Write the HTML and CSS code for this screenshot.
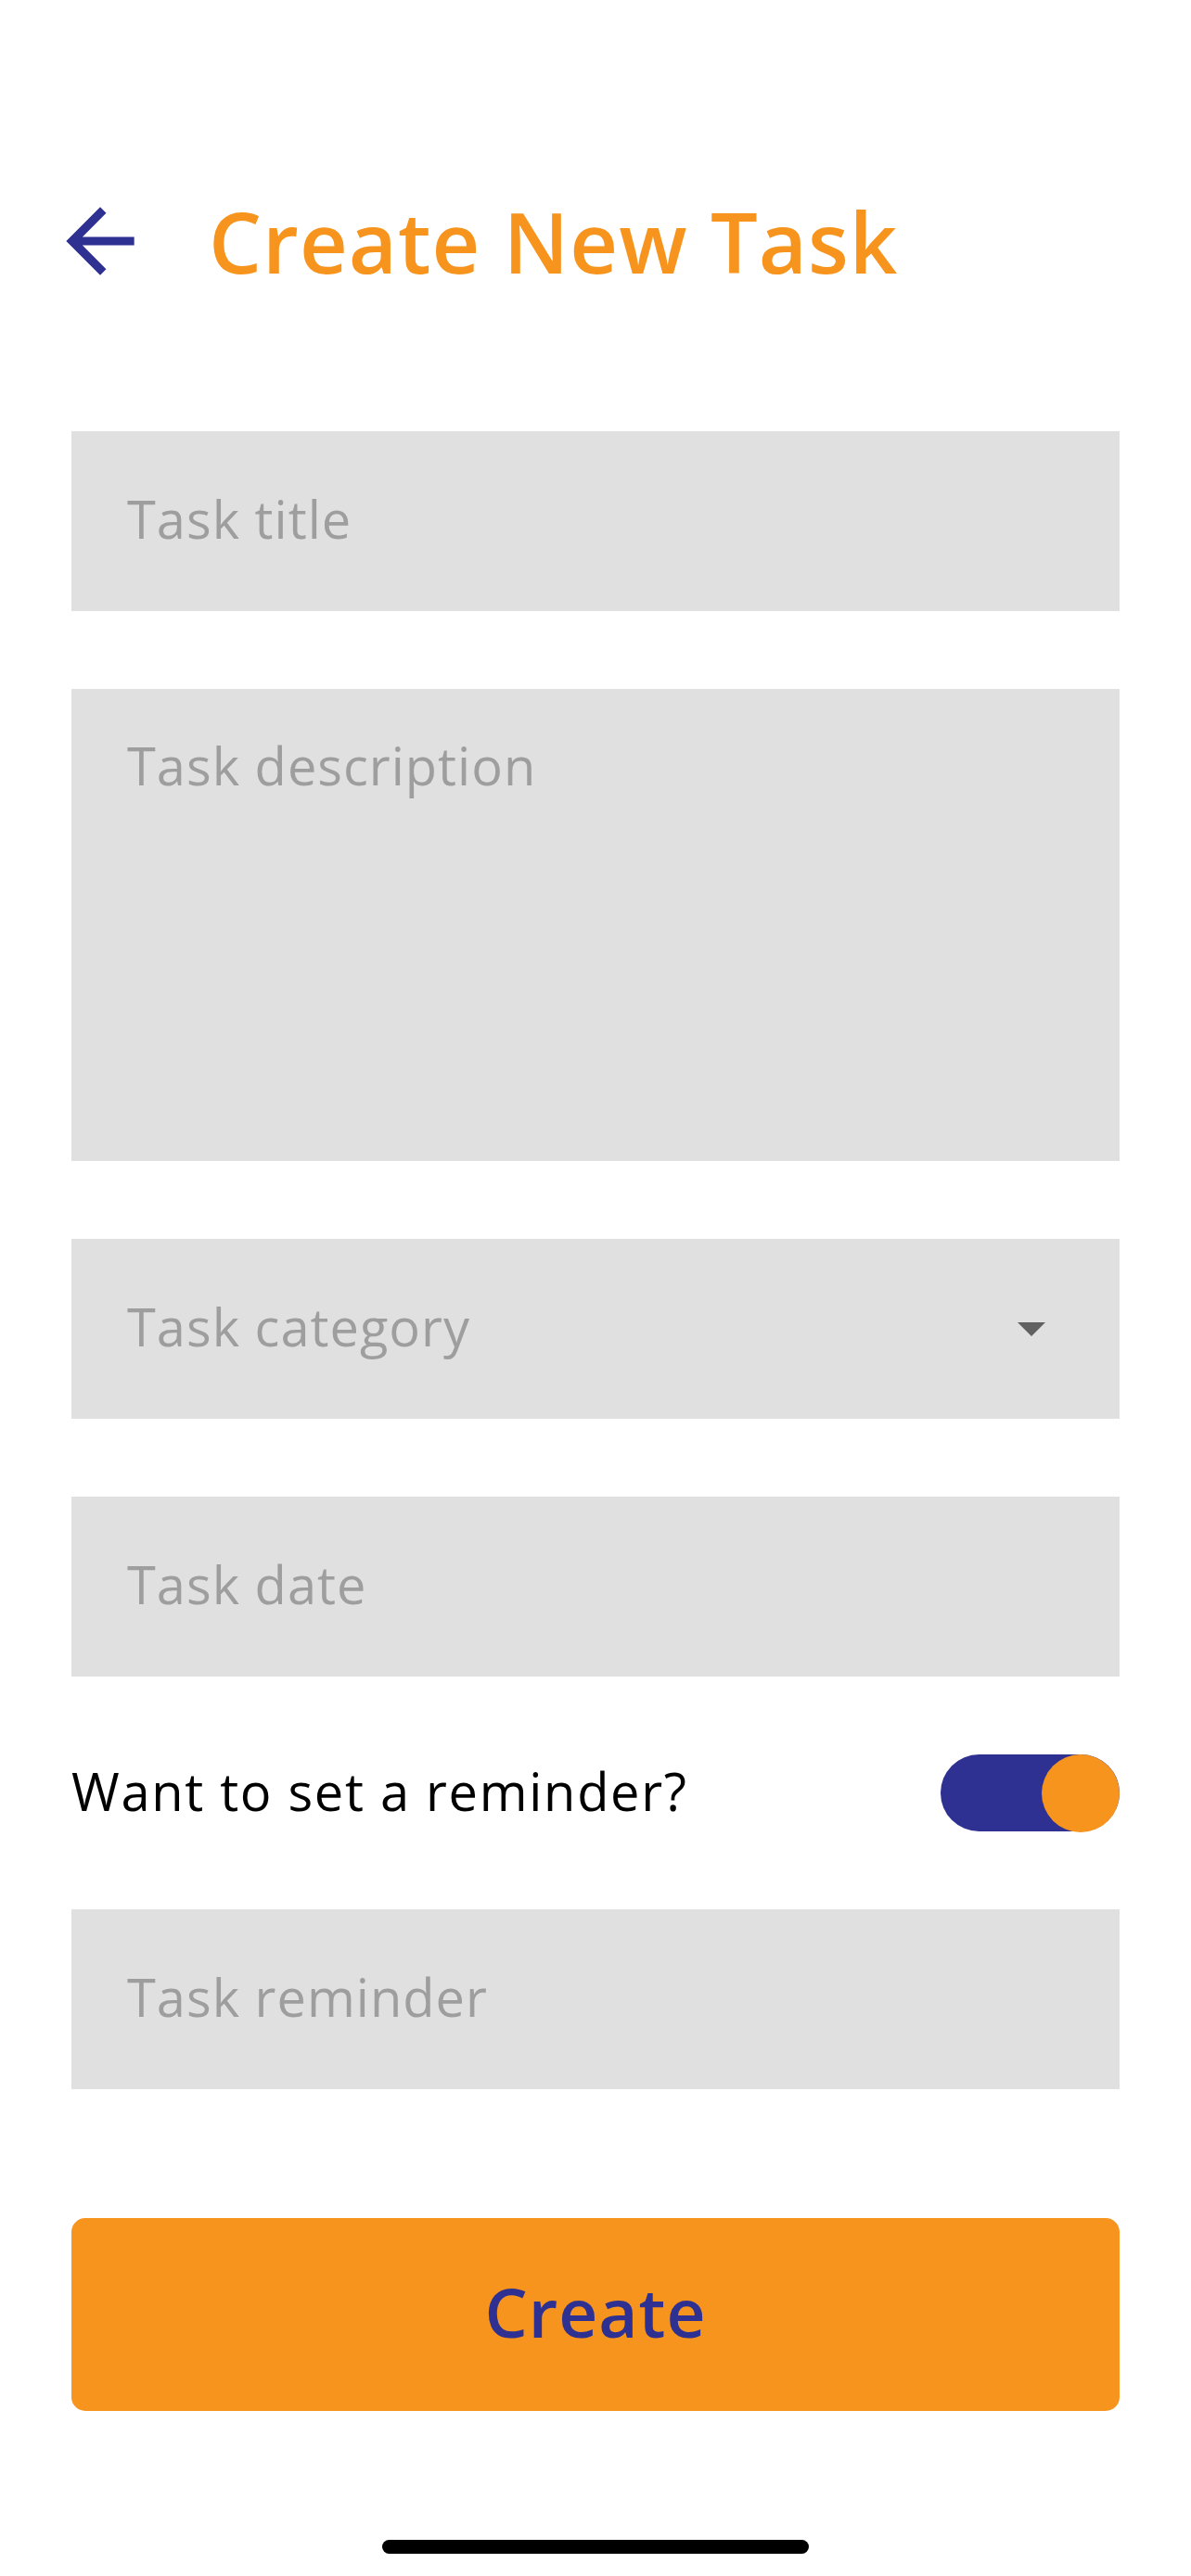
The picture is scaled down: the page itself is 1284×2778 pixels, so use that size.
FILE: index.html
```html
<!DOCTYPE html>
<html lang="en">
<head>
<meta charset="utf-8">
<title>Create New Task</title>
<link rel="stylesheet" href="styles.css">
</head>
<body>
<div class="screen">
  <header class="header">
    <svg class="back" viewBox="0 0 24 24" aria-hidden="true">
      <path d="M20 11H7.83l5.59-5.59L12 4l-8 8 8 8 1.41-1.41L7.83 13H20v-2z"/>
    </svg>
    <h1 class="title">Create New Task</h1>
  </header>

  <form class="form">
    <div class="field"><span class="placeholder">Task title</span></div>
    <div class="field field-area"><span class="placeholder">Task description</span></div>
    <div class="field field-select">
      <span class="placeholder">Task category</span>
      <span class="caret"></span>
    </div>
    <div class="field"><span class="placeholder">Task date</span></div>
    <div class="switch-row">
      <span class="switch-label">Want to set a reminder?</span>
      <span class="switch"><span class="knob"></span></span>
    </div>
    <div class="field"><span class="placeholder">Task reminder</span></div>
  </form>

  <button class="create" type="button">Create</button>

  <div class="home-indicator"></div>
</div>
</body>
</html>
```

FILE: styles.css
```css
* { box-sizing: border-box; }

html, body {
  margin: 0;
  padding: 0;
  background: #ffffff;
}

body {
  font-family: "Open Sans", "Noto Sans", sans-serif;
}

.screen {
  width: 1284px;
  height: 2778px;
  display: flex;
  flex-direction: column;
}

.header {
  display: flex;
  align-items: center;
  gap: 62px;
  padding: 205px 0 0 53px;
  height: 315px;
}

.back {
  width: 110px;
  height: 110px;
  fill: #2e3192;
  flex: none;
}

.title {
  margin: 0;
  font-size: 90px;
  font-weight: 600;
  line-height: 110px;
  color: #f7941e;
  letter-spacing: 1px;
}

.form {
  display: flex;
  flex-direction: column;
  gap: 84px;
  margin: 150px 77px 0 77px;
}

.field {
  height: 194px;
  background: #e0e0e0;
  display: flex;
  align-items: center;
  padding: 0 80px 6px 60px;
}

.placeholder {
  font-size: 56px;
  line-height: 67px;
  letter-spacing: 1px;
  color: #9e9e9e;
}

.field-area {
  height: 509px;
  align-items: flex-start;
  padding-top: 49px;
  padding-bottom: 0;
}

.field-select {
  justify-content: space-between;
}

.caret {
  width: 0;
  height: 0;
  margin-top: 6px;
  border-left: 15px solid transparent;
  border-right: 15px solid transparent;
  border-top: 15px solid #616161;
}

.switch-row {
  height: 83px;
  display: flex;
  align-items: center;
  justify-content: space-between;
}

.switch-label {
  font-size: 56px;
  line-height: 67px;
  letter-spacing: 1.7px;
  color: #000000;
  margin-bottom: 4px;
}

.switch {
  width: 193px;
  height: 83px;
  border-radius: 42px;
  background: #2e3192;
  display: flex;
  justify-content: flex-end;
}

.knob {
  width: 84px;
  height: 84px;
  margin-top: -0.5px;
  border-radius: 50%;
  background: #f7941e;
}

.create {
  margin: 139px 77px 0 77px;
  height: 208px;
  border: none;
  border-radius: 15px;
  background: #f7941e;
  color: #2e3192;
  font-family: "Open Sans", "Noto Sans", sans-serif;
  font-size: 73px;
  font-weight: 600;
  letter-spacing: 1px;
  padding: 0 0 8px 0;
}

.home-indicator {
  align-self: center;
  margin-top: 139px;
  width: 460px;
  height: 15px;
  border-radius: 8px;
  background: #000000;
}
```
